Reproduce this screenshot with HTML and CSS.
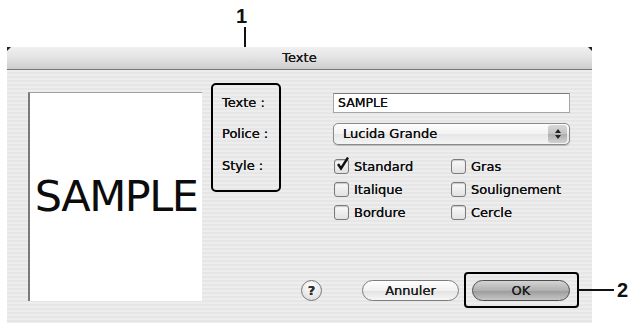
FILE: index.html
```html
<!doctype html>
<html lang="fr">
    <head>
        <meta charset="utf-8">
        <title>Texte</title>
        <link rel="stylesheet" href="styles.css">
    </head>
    <body>
        <div class="page">
            <div class="callout callout-one"><span class="callout-num">1</span><span class="callout-vline"></span></div>

            <div class="dialog">
                <div class="titlebar">Texte</div>
                <div class="dialog-body">
                    <div class="preview">SAMPLE</div>
                    <div class="main">
                        <div class="form">
                            <div class="labels">
                                <div class="row row-field">Texte :</div>
                                <div class="row row-popup">Police :</div>
                                <div class="row row-check">Style :</div>
                            </div>
                            <div class="controls">
                                <div class="field">SAMPLE</div>
                                <div class="popup">
                                    <span class="popup-text">Lucida Grande</span>
                                    <span class="stepper">
                                        <svg width="8" height="12" viewBox="0 0 8 12"><path d="M4 1 L7 5 L1 5 Z M4 11 L7 7 L1 7 Z" fill="#222"/></svg>
                                    </span>
                                </div>
                                <div class="checks">
                                    <label class="check"><span class="box checked"><svg width="15" height="15" viewBox="0 0 15 15"><path d="M3 7 L6 11.5 L13 0.5" fill="none" stroke="#111" stroke-width="2.4"/></svg></span>Standard</label>
                                    <label class="check"><span class="box"></span>Gras</label>
                                    <label class="check"><span class="box"></span>Italique</label>
                                    <label class="check"><span class="box"></span>Soulignement</label>
                                    <label class="check"><span class="box"></span>Bordure</label>
                                    <label class="check"><span class="box"></span>Cercle</label>
                                </div>
                            </div>
                        </div>
                        <div class="footer">
                            <span class="help">?</span>
                            <span class="btn">Annuler</span>
                            <span class="btn btn-default">OK</span>
                        </div>
                    </div>
                </div>
            </div>

            <div class="callout callout-two"><span class="callout-hline"></span><span class="callout-num">2</span></div>
        </div>
    </body>
</html>
```

FILE: styles.css
```css
body{margin:0;background:#fff;font:13px/1.2 "DejaVu Sans","Noto Sans",sans-serif;color:#111;}
.page{position:relative;width:640px;height:323px;overflow:hidden;}

/* dialog frame */
.dialog{position:relative;margin:47px 0 0 7px;width:585px;height:276px;display:flex;flex-direction:column;}
.dialog::before,.dialog::after{content:"";position:absolute;top:0;width:0;height:0;border-top:4px solid #222;}
.dialog::before{left:0;border-right:4px solid transparent;}
.dialog::after{right:0;border-left:4px solid transparent;}
.titlebar{height:22px;line-height:22px;text-align:center;color:#1a1a1a;text-shadow:0 0 0.6px #000;background:linear-gradient(#f0f0f0,#e4e4e4 45%,#cdcdcd);border-bottom:1px solid #777;}
.dialog-body{flex:1;display:flex;align-items:flex-start;padding:13px 0 21px 21px;background:repeating-linear-gradient(#ededed 0 2px,#e6e6e6 2px 4px);}

/* preview */
.preview{margin-top:9px;width:172px;height:208px;background:#fff;border-left:2px solid #7a7a7a;border-top:1px solid #a0a0a0;display:flex;align-items:center;justify-content:center;font-size:43px;letter-spacing:-1.5px;color:#0c0c0c;}

.main{margin-left:9px;height:218px;flex:1;display:flex;flex-direction:column;text-shadow:0 0 0.6px #000;}
.form{display:flex;align-items:flex-start;}

/* labels, framed by callout 1 */
.labels{width:57px;padding:8px 0 13px 9px;border:2px solid #000;border-radius:5px;display:flex;flex-direction:column;gap:10px;}
.row{display:flex;align-items:center;}
.row-field{height:20px;}
.row-popup{height:22px;}
.row-check{height:22px;}

.controls{margin:10px 0 0 52px;width:237px;display:flex;flex-direction:column;}
.field{height:18px;line-height:18px;padding-left:4px;font-size:12.5px;background:#fff;border:1px solid #a5a5a5;border-top-color:#7d7d7d;}
.popup{margin-top:10px;height:20px;display:flex;align-items:center;border:1px solid #8a8a8a;border-radius:5px;background:linear-gradient(#fdfdfd,#f2f2f2 50%,#e6e6e6 51%,#f4f4f4);box-shadow:0 1px 1px #bbb;}
.popup-text{flex:1;padding-left:9px;}
.stepper{width:19px;height:18px;margin-right:2px;border-radius:3px;display:flex;align-items:center;justify-content:center;background:linear-gradient(#d8d8d8,#c2c2c2 50%,#adadad 51%,#d2d2d2);}

.checks{margin-top:10px;padding-left:1px;display:grid;grid-template-columns:117px 1fr;grid-auto-rows:23px;}
.check{display:flex;align-items:center;gap:5px;}
.box{position:relative;width:13px;height:13px;border:1px solid #7a7a7a;border-radius:3px;background:linear-gradient(#fafafa,#e2e2e2);box-shadow:inset 0 1px 1px #c8c8c8;}
.box svg{position:absolute;left:0;top:-3px;}

/* buttons */
.footer{margin-top:auto;height:21px;display:flex;align-items:center;padding-left:90px;}
.help{width:19px;height:19px;border:1px solid #777;border-radius:50%;background:radial-gradient(circle at 50% 30%,#fff,#d8d8d8);text-align:center;line-height:19px;font-weight:bold;font-size:13px;color:#333;}
.btn{position:relative;height:19px;line-height:19px;text-align:center;border:1px solid #7d7d7d;border-radius:11px;background:linear-gradient(#fefefe,#f1f1f1 50%,#e2e2e2 51%,#f6f6f6);color:#222;}
.help + .btn{margin-left:40px;width:95px;}
.btn-default{margin-left:13px;width:96px;border-color:#4d4d4d;background:linear-gradient(#d4d4d4,#b0b0b0 50%,#9a9a9a 51%,#c6c6c6);}
.btn-default::after{content:"";position:absolute;left:-9px;right:-10px;top:-9px;bottom:-8px;border:2px solid #000;border-radius:4px;}

/* callouts */
.callout{position:absolute;font:bold 20px/20px "Liberation Sans",Arial,sans-serif;color:#111;}
.callout-one{left:236px;top:6px;width:14px;}
.callout-vline{position:absolute;left:8px;top:21px;width:2px;height:56px;background:#111;}
.callout-two{left:578px;top:280px;display:flex;align-items:center;}
.callout-hline{width:36px;height:2px;background:#111;margin-right:3px;}
```
